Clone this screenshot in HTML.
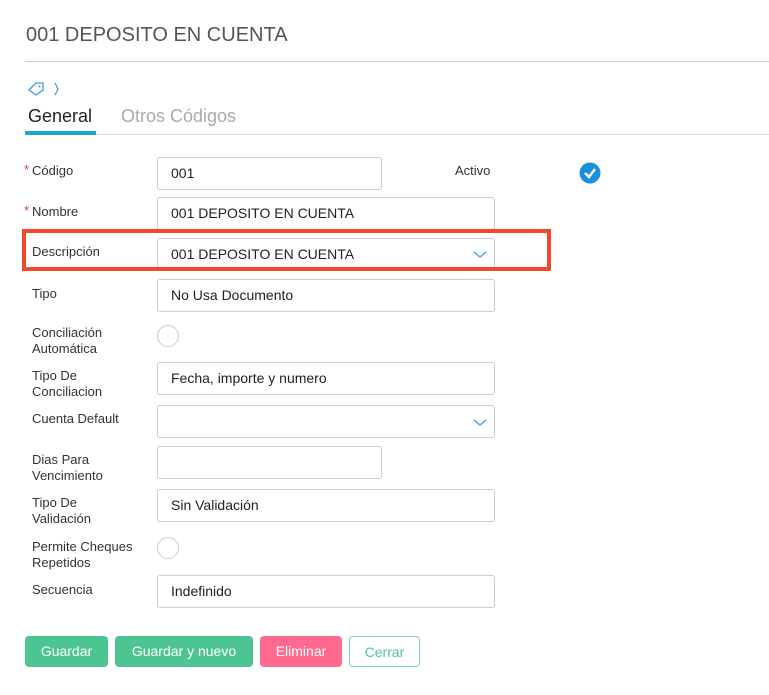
<!DOCTYPE html><html><head><style>
body{margin:0;width:769px;height:695px;background:#fff;font-family:"Liberation Sans",sans-serif;position:relative;overflow:hidden}
.a{position:absolute}
.l{position:absolute;left:32px;font-size:13px;color:#333;line-height:16px}
.i{position:absolute;left:157px;width:210px;height:31px;border:1px solid #ccc;border-radius:3px;font-size:14px;color:#222;line-height:31px;padding-left:13px;box-sizing:content-box}
.w{width:323px}
.r{position:absolute;left:157px;width:20px;height:20px;border:1px solid #ccc;border-radius:50%}
.s{position:absolute;color:#e33;font-size:13px;left:24px}
.b{position:absolute;top:636px;height:31px;line-height:31px;border-radius:4px;color:#fff;font-size:14px;text-align:center}
</style></head><body>
<div class="a" style="left:26px;top:24px;font-size:20px;color:#555">001 DEPOSITO EN CUENTA</div>
<div class="a" style="left:25px;top:61px;width:744px;height:1px;background:#ccc"></div>
<svg class="a" style="left:27px;top:81px" width="40" height="16" viewBox="0 0 40 16"><path d="M2 9 L9 2 L16 2 L16 9 L9 14 Z" fill="none" stroke="#3a9ee8" stroke-width="1.3"/><circle cx="12.5" cy="5.5" r="1" fill="#3a9ee8"/><path d="M28 2 L31 8 L28 14" fill="none" stroke="#3a9ee8" stroke-width="1.3"/></svg>
<div class="a" style="left:28px;top:106px;font-size:18px;color:#222">General</div>
<div class="a" style="left:121px;top:106px;font-size:18px;color:#aaa">Otros Códigos</div>
<div class="a" style="left:25px;top:134px;width:744px;height:1px;background:#ddd"></div>
<div class="a" style="left:25px;top:131px;width:71px;height:4px;background:#1aa8d0"></div>
<span class="s" style="top:162px">*</span><div class="l" style="top:163px">Código</div>
<div class="i" style="top:157px">001</div>
<div class="l" style="left:455px;top:163px">Activo</div>
<svg class="a" style="left:579px;top:162px" width="22" height="22"><circle cx="11" cy="11" r="10.5" fill="#1a8fdb"/><path d="M6 11 L10 15 L16 7" fill="none" stroke="#fff" stroke-width="2.5"/></svg>
<span class="s" style="top:203px">*</span><div class="l" style="top:204px">Nombre</div>
<div class="i w" style="top:197px">001 DEPOSITO EN CUENTA</div>
<div class="l" style="top:244px">Descripción</div>
<div class="i w" style="top:238px">001 DEPOSITO EN CUENTA</div>
<svg class="a" style="left:473px;top:251px" width="14" height="8"><path d="M1 1 L7 6 L13 1" fill="none" stroke="#6aa8e8" stroke-width="1.5"/></svg>
<div class="a" style="left:22px;top:229px;width:521px;height:34px;border:4px solid #f04a2a"></div>
<div class="l" style="top:286px">Tipo</div>
<div class="i w" style="top:279px">No Usa Documento</div>
<div class="l" style="top:325px">Conciliación<br>Automática</div>
<div class="r" style="top:325px"></div>
<div class="l" style="top:368px">Tipo De<br>Conciliacion</div>
<div class="i w" style="top:362px">Fecha, importe y numero</div>
<div class="l" style="top:411px">Cuenta Default</div>
<div class="i w" style="top:405px"></div>
<svg class="a" style="left:473px;top:419px" width="14" height="8"><path d="M1 1 L7 6 L13 1" fill="none" stroke="#6aa8e8" stroke-width="1.5"/></svg>
<div class="l" style="top:452px">Dias Para<br>Vencimiento</div>
<div class="i" style="top:446px"></div>
<div class="l" style="top:495px">Tipo De<br>Validación</div>
<div class="i w" style="top:489px">Sin Validación</div>
<div class="l" style="top:539px">Permite Cheques<br>Repetidos</div>
<div class="r" style="top:537px"></div>
<div class="l" style="top:582px">Secuencia</div>
<div class="i w" style="top:575px">Indefinido</div>
<div class="b" style="left:25px;width:83px;background:#4dc592">Guardar</div>
<div class="b" style="left:115px;width:138px;background:#4dc592">Guardar y nuevo</div>
<div class="b" style="left:260px;width:82px;background:#ff6b8f">Eliminar</div>
<div class="b" style="left:349px;width:69px;height:29px;border:1px solid #7fd4b0;color:#4dc592;background:#fff">Cerrar</div>
</body></html>
